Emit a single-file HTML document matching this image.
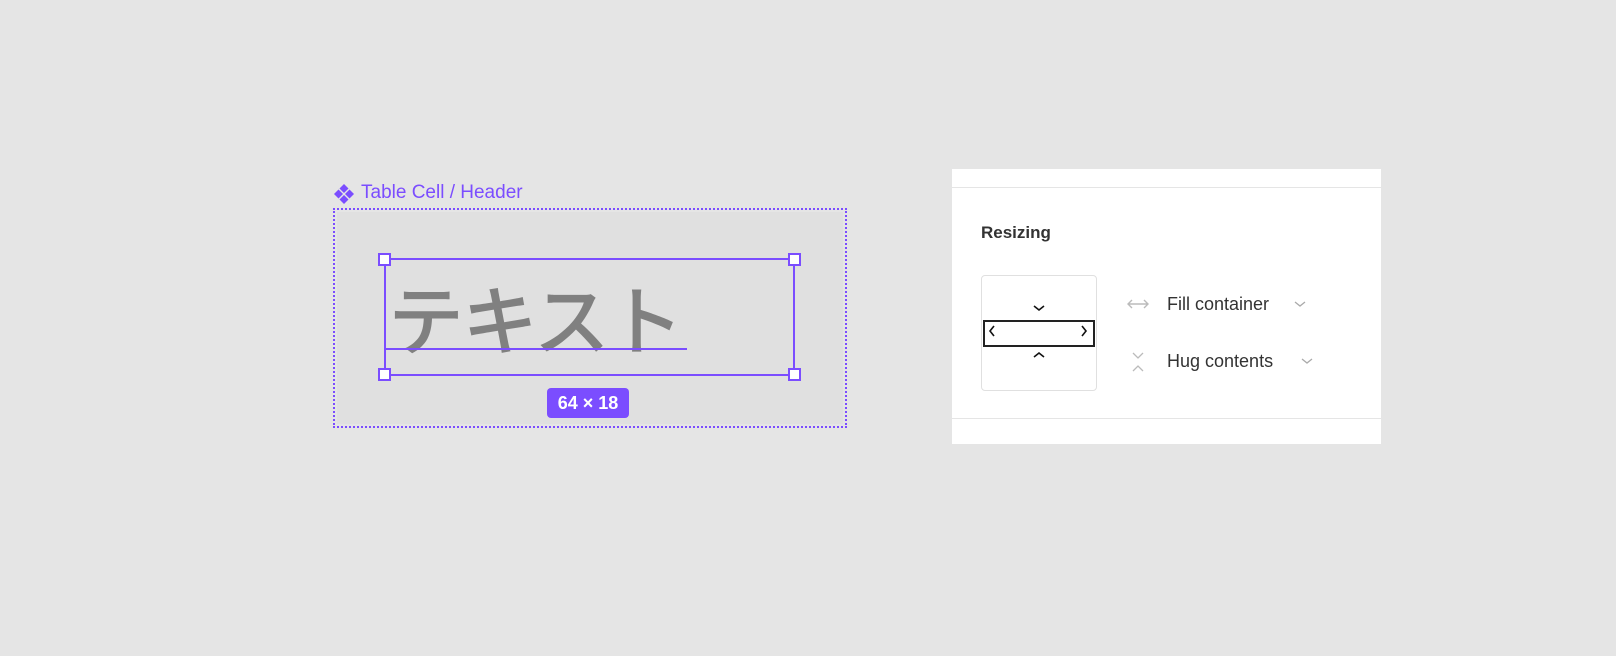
<!DOCTYPE html>
<html><head><meta charset="utf-8"><style>
*{margin:0;padding:0;box-sizing:border-box}
body{width:1616px;height:656px;background:#e5e5e5;position:relative;overflow:hidden;font-family:"Liberation Sans","Noto Sans CJK JP",sans-serif}
.a{position:absolute}
</style></head><body>
<svg class="a" style="left:333px;top:183px" width="22" height="22" viewBox="0 0 22 22"><g fill="#7b4dff"><path d="M11 1l4.5 4.5-4.5 4.5-4.5-4.5z"/><path d="M11 12l4.5 4.5-4.5 4.5-4.5-4.5z"/><path d="M5.5 6.5l4.5 4.5-4.5 4.5-4.5-4.5z"/><path d="M16.5 6.5l4.5 4.5-4.5 4.5-4.5-4.5z"/></g></svg>
<div class="a" style="left:361px;top:181px;font-size:19px;color:#7b4dff;line-height:24px">Table Cell / Header</div>
<div class="a" style="left:333px;top:208px;width:514px;height:220px;border:2px dotted #7b4dff"></div>
<div class="a" style="left:337px;top:212px;width:506px;height:212px;background:#e0e0e0"></div>
<div class="a" style="left:388px;top:266px;font-size:76px;font-weight:500;line-height:100px;color:#808080;font-family:'Noto Sans CJK JP',sans-serif;letter-spacing:-2px;white-space:nowrap">テキスト</div>
<div class="a" style="left:384px;top:348px;width:303px;height:2px;background:#7b4dff"></div>
<div class="a" style="left:384px;top:258px;width:411px;height:118px;border:2px solid #7b4dff"></div>
<div class="a" style="left:378px;top:253px;width:13px;height:13px;background:#fff;border:2px solid #7b4dff"></div>
<div class="a" style="left:788px;top:253px;width:13px;height:13px;background:#fff;border:2px solid #7b4dff"></div>
<div class="a" style="left:378px;top:368px;width:13px;height:13px;background:#fff;border:2px solid #7b4dff"></div>
<div class="a" style="left:788px;top:368px;width:13px;height:13px;background:#fff;border:2px solid #7b4dff"></div>
<div class="a" style="left:547px;top:388px;width:82px;height:30px;background:#7b4dff;border-radius:4px;color:#fff;font-size:18px;font-weight:bold;text-align:center;line-height:30px">64 × 18</div>
<div class="a" style="left:952px;top:169px;width:429px;height:275px;background:#fff"></div>
<div class="a" style="left:952px;top:187px;width:429px;height:1px;background:#e5e5e5"></div>
<div class="a" style="left:952px;top:418px;width:429px;height:1px;background:#e5e5e5"></div>
<div class="a" style="left:981px;top:222px;font-size:17px;font-weight:bold;color:#333;line-height:22px">Resizing</div>
<div class="a" style="left:981px;top:275px;width:116px;height:116px;border:1px solid #e0e0e0;border-radius:4px"></div>
<div class="a" style="left:983px;top:320px;width:112px;height:27px;border:2px solid #222"></div>
<svg class="a" style="left:981px;top:275px" width="116" height="116" viewBox="0 0 116 116" fill="none" stroke="#111" stroke-width="1.6"><path d="M53 31l5 4 5-4"/><path d="M53 82l5-4 5 4"/><path d="M13 51l-4 5 4 5"/><path d="M101 51l4 5-4 5"/></svg>
<svg class="a" style="left:1126px;top:295px" width="24" height="18" viewBox="0 0 24 18" fill="none" stroke="#bbb" stroke-width="1.4"><path d="M2 9h20M6 5L2 9l4 4M18 5l4 4-4 4"/></svg>
<div class="a" style="left:1167px;top:292px;font-size:18px;color:#333;line-height:24px">Fill container</div>
<svg class="a" style="left:1293px;top:298px" width="14" height="12" viewBox="0 0 14 12" fill="none" stroke="#aaa" stroke-width="1.3"><path d="M2 4l5 4 5-4"/></svg>
<svg class="a" style="left:1131px;top:351px" width="14" height="22" viewBox="0 0 14 22" fill="none" stroke="#bbb" stroke-width="1.3"><path d="M2 2l5 5 5-5M2 20l5-5 5 5"/></svg>
<div class="a" style="left:1167px;top:349px;font-size:18px;color:#333;line-height:24px">Hug contents</div>
<svg class="a" style="left:1300px;top:355px" width="14" height="12" viewBox="0 0 14 12" fill="none" stroke="#aaa" stroke-width="1.3"><path d="M2 4l5 4 5-4"/></svg>
</body></html>
